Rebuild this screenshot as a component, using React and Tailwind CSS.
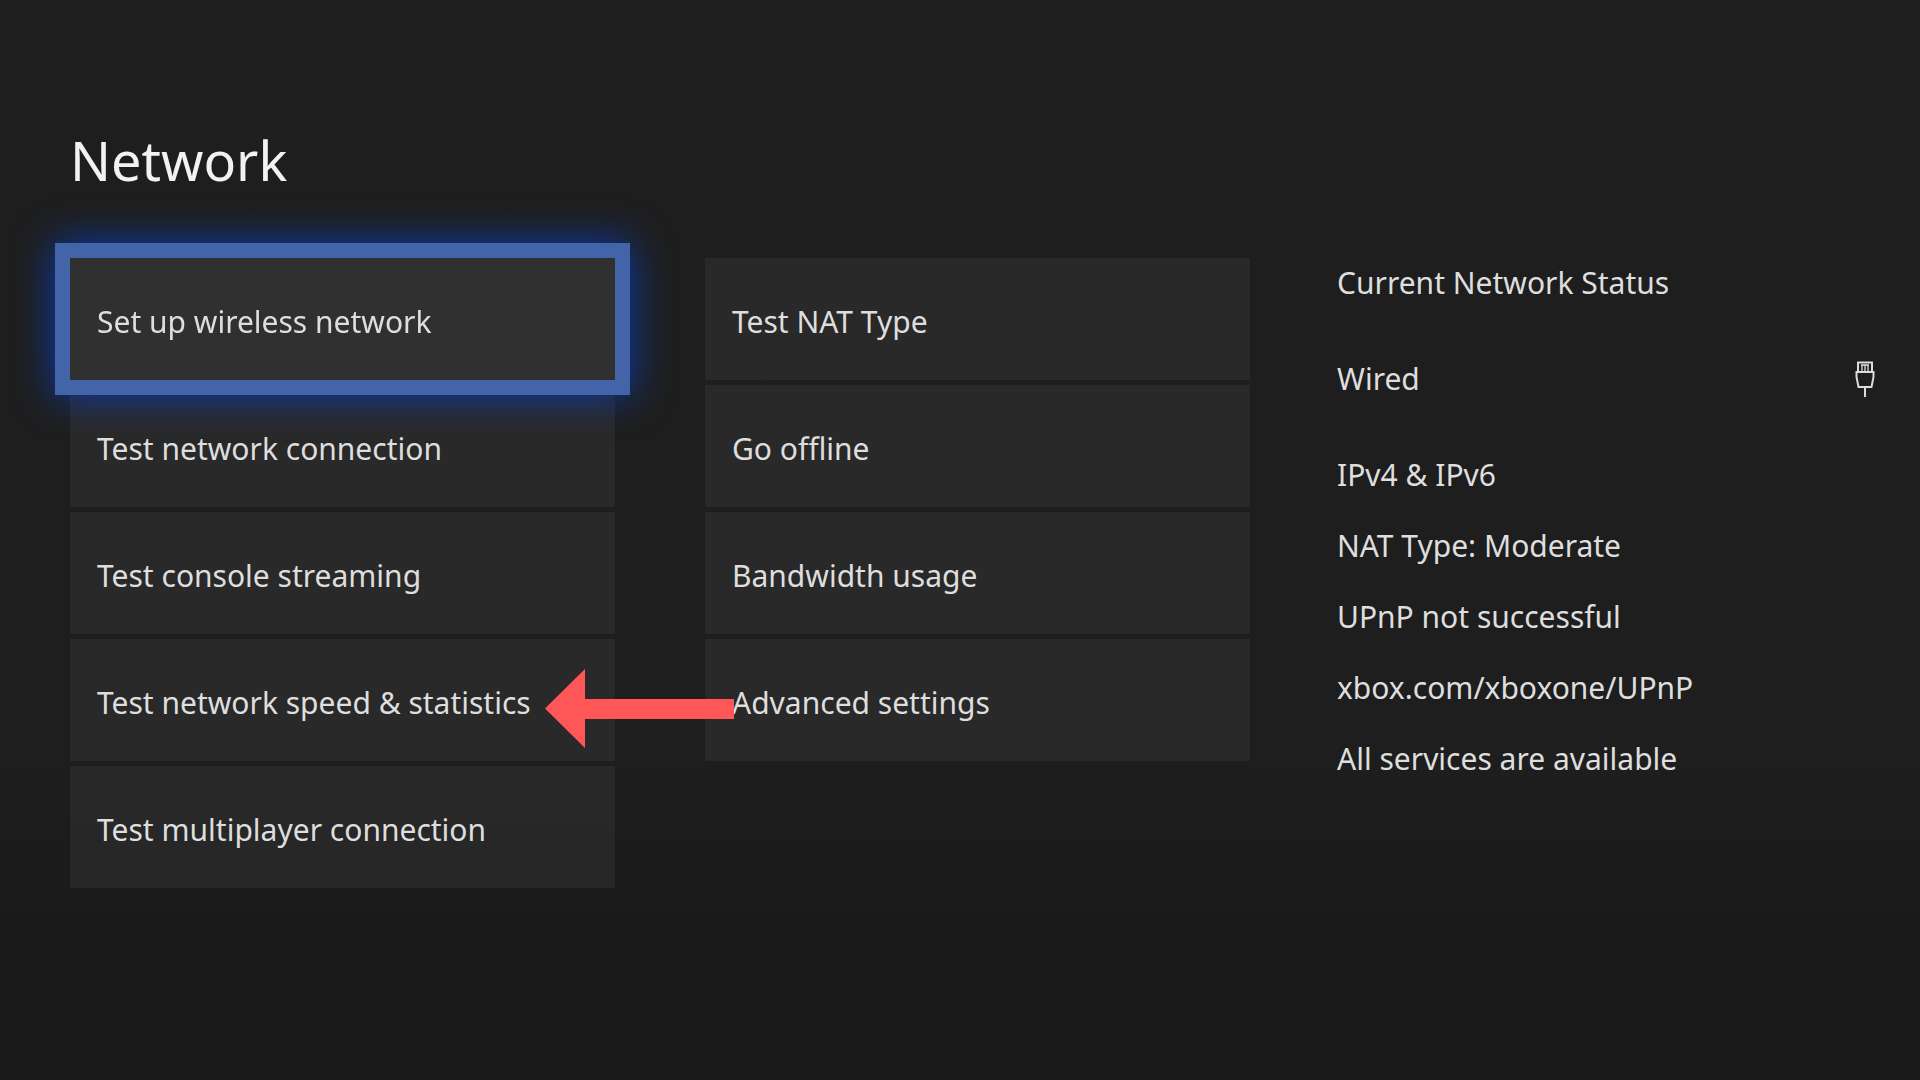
const testOptions = [
  "Set up wireless network",
  "Test network connection",
  "Test console streaming",
  "Test network speed & statistics",
  "Test multiplayer connection",
];

const otherOptions = ["Test NAT Type", "Go offline", "Bandwidth usage", "Advanced settings"];

const details = [
  "IPv4 & IPv6",
  "NAT Type: Moderate",
  "UPnP not successful",
  "xbox.com/xboxone/UPnP",
  "All services are available",
];

function PointerArrow() {
  return (
    <svg
      className="pointer-events-none absolute top-[30px] left-[475px] z-20 h-20 w-[189px]"
      viewBox="0 0 189 80"
      fill="#ff5757"
      aria-hidden="true"
    >
      <path d="M0 39.500L40 0V30H189V50H40V79Z" />
    </svg>
  );
}

function EthernetIcon() {
  return (
    <svg
      className="h-9 w-5 shrink-0"
      viewBox="0 0 20 36"
      fill="none"
      stroke="#dcdcdc"
      strokeWidth="2"
      role="img"
      aria-label="Ethernet"
    >
      <path d="M3 11V1.500H17V11" />
      <path d="M7 3.500V10M10 3.500V10M13 3.500V10M6 4H14" strokeWidth="1.300" />
      <path d="M1.500 11H18.500V16L16.500 26H3.500L1.500 16Z" />
      <path d="M10 26V36" />
    </svg>
  );
}

function Tile({ label, selected, children }) {
  return (
    <li className="relative">
      <button
        type="button"
        className={
          selected
            ? "relative z-10 flex h-[122px] w-full items-center bg-[#303030] px-[27px] pt-1.5 text-left ring-[15px] ring-[#4464aa] drop-shadow-[0_0_20px_#0a3cb0]"
            : "flex h-[122px] w-full items-center bg-white/5 px-[27px] pt-1.5 text-left"
        }
      >
        {label}
      </button>
      {children}
    </li>
  );
}

export default function App() {
  return (
    <main className="min-h-screen bg-linear-to-b from-[#1e1e1e] from-70% to-[#191919] to-90% pt-[120px] pr-[45px] pb-16 pl-[70px] font-['Noto_Sans','Open_Sans',sans-serif] text-[30px] leading-10 text-[#dedede]">
      <h1 className="text-[54px] leading-20 text-[#f2f2f2]">Network</h1>
      <div className="mt-[58px] grid grid-cols-[1180fr_538fr] gap-[87px]">
        <nav aria-label="Network options" className="grid grid-cols-2 items-start gap-[90px]">
          <ul className="flex flex-col gap-[5px]">
            {testOptions.map((label, i) => (
              <Tile key={label} label={label} selected={i === 0}>
                {i === 3 && <PointerArrow />}
              </Tile>
            ))}
          </ul>
          <ul className="flex flex-col gap-[5px]">
            {otherOptions.map((label) => (
              <Tile key={label} label={label} />
            ))}
          </ul>
        </nav>
        <section aria-labelledby="status" className="pt-[5px]">
          <h2 id="status">Current Network Status</h2>
          <div className="mt-14 flex items-center justify-between">
            <p>Wired</p>
            <EthernetIcon />
          </div>
          <ul className="mt-14 flex flex-col gap-[31px]">
            {details.map((line) => (
              <li key={line}>{line}</li>
            ))}
          </ul>
        </section>
      </div>
    </main>
  );
}
